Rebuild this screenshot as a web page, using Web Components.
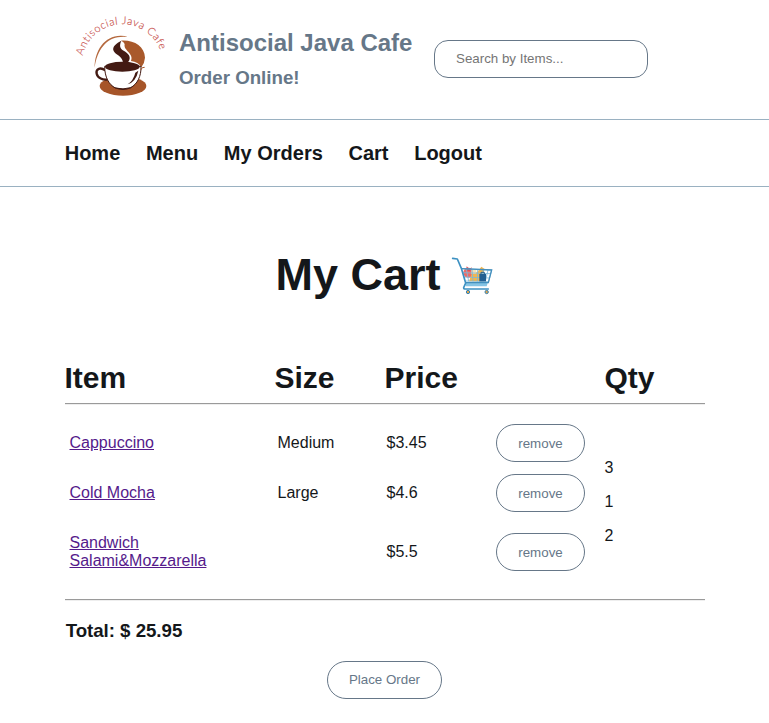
<!DOCTYPE html>
<html lang="en">
<head>
<meta charset="utf-8">
<title>Antisocial Java Cafe</title>
<style>
body{margin:0;background:#fff;color:#14171a;font-family:"Liberation Sans",Arial,sans-serif;font-size:16px;line-height:18px}
</style>
</head>
<body>
<cafe-page>
  <cafe-header slot="header"></cafe-header>
  <cafe-nav slot="nav"></cafe-nav>
  <cafe-cart></cafe-cart>
</cafe-page>
<script>
function define(name, html) {
  customElements.define(name, class extends HTMLElement {
    constructor() {
      super();
      this.attachShadow({mode: 'open'}).innerHTML = html;
    }
  });
}

define('cafe-logo', `
<style>:host{display:block;width:110px;height:100px}svg{display:block}text{font-family:Lato,sans-serif;font-weight:300;font-size:32px;fill:#c9524c;stroke:#c9524c;stroke-width:.5px;letter-spacing:2px}</style>
<svg width="110" height="100" viewBox="0 0 330 300">
  <defs><path id="arc" d="M53 152A122 122 0 0 1 292 158"/></defs>
  <text><textPath href="#arc">Antisocial Java Cafe</textPath></text>
  <path d="M89 188C88 137 119 91 168 92Q180 92 188 96Q176 94 166 96C125 98 96 135 89 188Z" fill="#b5693e"/>
  <ellipse cx="174" cy="243" rx="70" ry="29" fill="#a65529"/>
  <path d="M168 107C206 104 239 124 240 158Q239 174 229 187Q220 170 198 168C208 145 174 137 179 117Q176 110 168 107Z" fill="#a9592b"/>
  <path d="M169 107C155 115 140 124 146 138C151 150 171 151 174 172L189 172C201 156 190 145 176 137C161 129 165 117 169 107Z" fill="#431a13"/>
  <path d="M121 196C104 184 92 194 95 206C98 219 114 226 128 223" fill="none" stroke="#431a13" stroke-width="7"/>
  <path d="M119 184C119 217 132 239 151 249Q174 255 197 248C217 237 229 214 228 184Z" fill="#fff" stroke="#431a13" stroke-width="3"/>
  <path d="M139 241Q152 251 174 251Q196 251 209 240L197 250Q174 260 150 250Z" fill="#431a13"/>
  <path d="M211 203Q205 227 188 238Q213 230 220 197Z" fill="#431a13"/>
  <ellipse cx="172" cy="185" rx="52" ry="15" fill="#431a13"/>
  <path d="M227 195Q231 185 239 187" fill="none" stroke="#a65529" stroke-width="3"/>
</svg>`);

define('cafe-search', `
<style>:host{display:block;width:214px;height:38px}
input{box-sizing:border-box;display:block;width:100%;height:100%;padding:0 21px 2px;border:1px solid #667788;border-radius:14px;font:13.333px "Liberation Sans",Arial,sans-serif;background:#fff;outline:0}
input::placeholder{color:#757575}</style>
<input type="text" placeholder="Search by Items...">`);

define('cafe-header', `
<style>:host{display:flex;align-items:flex-start;height:119px;box-sizing:border-box;padding:5px 0 0 65px;color:#667788}
.t{padding:24px 0 0 4px;width:255px}
h2{margin:0;font-size:24px;line-height:27px}
h3{margin:11px 0 0;font-size:18.72px;line-height:21px}
cafe-search{margin-top:35px}</style>
<cafe-logo></cafe-logo>
<div class="t"><h2>Antisocial Java Cafe</h2><h3>Order Online!</h3></div>
<cafe-search></cafe-search>`);

define('cafe-nav', `
<style>:host{display:flex;align-items:center;gap:25.7px;height:68px;box-sizing:border-box;padding-left:64.7px;border:solid #9ab1c1;border-width:1px 0;font-size:20px;line-height:24px;font-weight:bold}
a{color:inherit;text-decoration:none}</style>
<a>Home</a><a>Menu</a><a>My Orders</a><a>Cart</a><a>Logout</a>`);

define('cart-icon', `
<style>:host{display:block;width:45px;height:45px}svg{display:block}</style>
<svg width="45" height="45" viewBox="30 25 135 135">
  <circle cx="85" cy="81" r="15" fill="#ef6b67"/><path d="M80 62l8 7 8-4-6 12-12-3z" fill="#dc4f55"/>
  <path d="M87 107l9-25 16-3 12-16 10 7-10 37z" fill="#f3b64f"/>
  <rect x="94" y="73" width="15" height="12" fill="#f4e1b5"/>
  <path d="M65 69L155 73L146 108L76 106M67 81L151 84M70 94L149 97M79 70L86 107M96 71L99 107M113 72L112 107M130 73L125 107M144 73L136 107" fill="none" stroke="#7db8d8" stroke-width="2.5"/>
  <rect x="118" y="85" width="20" height="22" fill="#235f91"/><path d="M123 85v-5h10v5" fill="none" stroke="#235f91" stroke-width="3"/>
  <path d="M76 112H143L140 122H77Z" fill="#84c4e5"/>
  <path d="M38 38L52 40L64 68L77 112L71 126Q71 130 77 130H145" fill="none" stroke="#3d91c2" stroke-width="5" stroke-linejoin="round" stroke-linecap="round"/>
  <path d="M65 69L155 73L145 111L77 111" fill="none" stroke="#438fbd" stroke-width="4"/>
  <circle cx="84" cy="139" r="5" fill="#e4a348" stroke="#3584b6" stroke-width="3"/><circle cx="140" cy="139" r="5" fill="#e4a348" stroke="#3584b6" stroke-width="3"/>
</svg>`);

define('pill-button', `
<style>:host{display:block;width:89px}
button{display:block;box-sizing:border-box;width:100%;height:38px;padding:0 0 var(--lift,0px);border:1px solid #667788;border-radius:19px;background:#fff;color:#667788;font:13.333px "Liberation Sans",Arial,sans-serif;white-space:nowrap}</style>
<button><slot></slot></button>`);

define('cart-row', `
<style>:host{display:grid;grid-template-columns:208px 109px 109.5px auto;align-items:center;height:50px;padding-left:4.5px}
:host([tall]){height:68px}
a{color:#551a8b;text-decoration:underline}.i{width:140px}</style>
<div class="i"><a><slot name="item"></slot></a></div><div><slot name="size"></slot></div><div><slot name="price"></slot></div><pill-button>remove</pill-button>`);

define('cafe-cart', `
<style>:host{display:block;width:640px;margin-left:65px}
h1{display:flex;align-items:center;margin:0;padding:63px 0 0 210.5px;height:50px;font-size:45px;line-height:50px}
h1 span{width:165px;white-space:nowrap}
h1 cart-icon{margin:2px 0 0 9.5px}
.cols{display:grid;grid-template-columns:210px 110px 220px auto;margin:61px 0 8px -.5px;font-size:30px;line-height:34px;font-weight:bold}
hr{margin:0;height:0;border:solid;border-width:1px 0;border-color:#9a9a9a transparent #eee}
.body{display:grid;grid-template-columns:540px auto;height:194px;box-sizing:border-box}
.rows{padding-top:13px}
.qty{padding-top:54px;margin-left:-.5px}.qty p{margin:0 0 16px}
.total{margin:19px 0 0 .7px;font-size:18.72px;line-height:21px;font-weight:bold;letter-spacing:-.04px}
.order{margin:20px 0 0 262px}
.order pill-button{width:115px;--lift:2px}</style>
<h1><span>My Cart</span><cart-icon></cart-icon></h1>
<div class="cols"><span>Item</span><span>Size</span><span>Price</span><span>Qty</span></div>
<hr>
<div class="body">
<div class="rows">
<cart-row><span slot="item">Cappuccino</span><span slot="size">Medium</span><span slot="price">$3.45</span></cart-row>
<cart-row><span slot="item">Cold Mocha</span><span slot="size">Large</span><span slot="price">$4.6</span></cart-row>
<cart-row tall><span slot="item">Sandwich Salami&amp;Mozzarella</span><span slot="price">$5.5</span></cart-row>
</div>
<div class="qty"><p>3</p><p>1</p><p>2</p></div>
</div>
<hr>
<div class="total">Total: $ 25.95</div>
<div class="order"><pill-button>Place Order</pill-button></div>`);

define('cafe-page', `
<style>:host{display:flex;flex-direction:column;height:723px;overflow:hidden}</style>
<slot name="header"></slot><slot name="nav"></slot><slot></slot>`);
</script>
</body>
</html>
